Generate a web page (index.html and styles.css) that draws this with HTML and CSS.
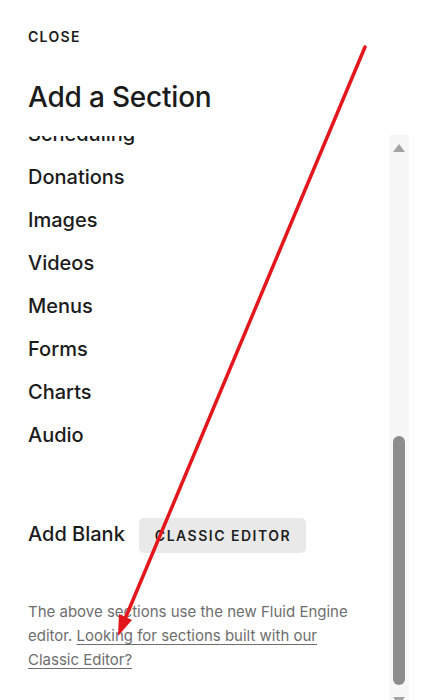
FILE: index.html
```html
<!DOCTYPE html>
<html lang="en">
<head>
<meta charset="utf-8">
<title>Add a Section</title>
<link rel="stylesheet" href="styles.css">
</head>
<body>
<div class="panel">
  <div class="close">CLOSE</div>
  <h1 class="title">Add a Section</h1>
  <div class="scroll-row">
    <div class="scroll-area">
      <div class="scroll-content">
        <ul class="section-list">
          <li>Scheduling</li>
          <li>Donations</li>
          <li>Images</li>
          <li>Videos</li>
          <li>Menus</li>
          <li>Forms</li>
          <li>Charts</li>
          <li>Audio</li>
        </ul>
        <div class="blank-row">
          <span class="add-blank">Add Blank</span>
          <span class="classic-btn">CLASSIC EDITOR</span>
        </div>
        <p class="note">The above sections use the new Fluid Engine editor. <a class="note-link" href="#">Looking for sections built with our Classic Editor?</a></p>
      </div>
    </div>
    <div class="scrollbar">
      <div class="sb-up"></div>
      <div class="sb-space"></div>
      <div class="sb-thumb"></div>
      <div class="sb-down"></div>
    </div>
  </div>
</div>
<svg class="annotation" width="427" height="700" viewBox="0 0 427 700" xmlns="http://www.w3.org/2000/svg">
  <line x1="365" y1="47" x2="125" y2="619" stroke="#e3161c" stroke-width="3.5" stroke-linecap="round"/>
  <polygon points="118,636 132,620 119,614" fill="#e3161c"/>
</svg>
</body>
</html>
```

FILE: styles.css
```css
html, body {
  margin: 0;
  padding: 0;
  background: #ffffff;
  overflow: hidden;
}
body {
  position: relative;
  width: 427px;
  height: 700px;
  font-family: Inter, "Noto Sans", "Liberation Sans", sans-serif;
  color: #1b1b1b;
}
.panel {
  padding-top: 27px;
  padding-left: 28px;
}
.close {
  font-size: 14px;
  line-height: 20px;
  font-weight: 600;
  letter-spacing: 1.3px;
}
.title {
  margin: 32px 0 21px 0;
  font-size: 28px;
  line-height: 36px;
  font-weight: 500;
  letter-spacing: -0.2px;
}
.scroll-row {
  display: flex;
  height: 576px;
}
.scroll-area {
  flex: 1;
  overflow: hidden;
}
.scroll-content {
  margin-top: -23px;
}
.section-list {
  list-style: none;
  margin: 0;
  padding: 0;
}
.section-list li {
  font-size: 20px;
  line-height: 43px;
  font-weight: 500;
}
.blank-row {
  display: flex;
  align-items: baseline;
  gap: 14px;
  margin-top: 61px;
}
.add-blank {
  font-size: 20px;
  font-weight: 500;
}
.classic-btn {
  display: inline-block;
  height: 35px;
  line-height: 35px;
  padding: 0 15px 0 16px;
  background: #e9e9e9;
  border-radius: 5px;
  font-size: 14px;
  font-weight: 600;
  letter-spacing: 1.5px;
  color: #1f1f1f;
}
.note {
  margin: 47px 0 0 0;
  max-width: 336px;
  font-size: 15px;
  line-height: 24px;
  color: #6e6e6e;
}
.note-link {
  color: #6e6e6e;
  text-decoration: underline;
  text-underline-offset: 3px;
}
.scrollbar {
  width: 20px;
  margin-right: 18px;
  margin-top: -1px;
  background: #f7f7f7;
  display: flex;
  flex-direction: column;
  align-items: center;
}
.sb-up {
  margin-top: 9px;
  width: 0;
  height: 0;
  border-left: 6px solid transparent;
  border-right: 6px solid transparent;
  border-bottom: 8px solid #a3a3a3;
}
.sb-space {
  height: 284px;
}
.sb-thumb {
  width: 12px;
  height: 249px;
  background: #8c8c8c;
  border-radius: 6px;
}
.sb-down {
  margin-top: 12px;
  width: 0;
  height: 0;
  border-left: 6px solid transparent;
  border-right: 6px solid transparent;
  border-top: 8px solid #a3a3a3;
}
.annotation {
  position: absolute;
  left: 0;
  top: 0;
  pointer-events: none;
}
```
